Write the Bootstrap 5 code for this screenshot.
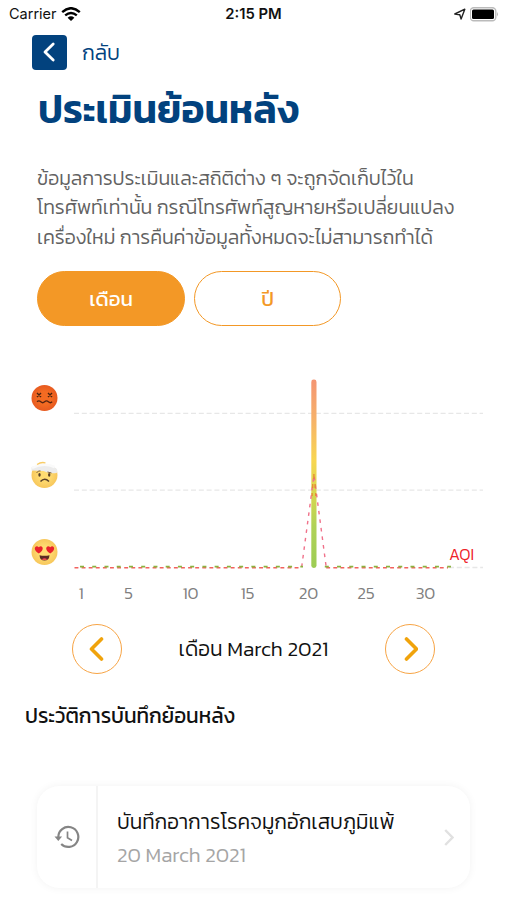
<!DOCTYPE html>
<html lang="th">
<head>
<meta charset="utf-8">
<meta name="viewport" content="width=device-width, initial-scale=1">
<title>ประเมินย้อนหลัง</title>
<link href="https://cdn.jsdelivr.net/npm/bootstrap@5.3.0/dist/css/bootstrap.min.css" rel="stylesheet">
<style>
:root{--navy:#02427e;--orange:#f39826}
body{font-family:Kanit,Prompt,"Noto Sans Thai","Noto Sans",sans-serif;font-weight:300;background:#fff;color:#111;overflow:hidden}
.screen{width:507px;height:900px;overflow:hidden}
.screen svg{display:block;flex:none}
.status{height:28px;padding:0 9px;font:14.5px/28px Inter,sans-serif}
.status>div{flex:1 1 0}
.clock{font-weight:600;font-size:14.8px}
.topbar{height:48px;padding:0 32px;gap:15px}
.back{width:35px;height:35px;border-radius:4px;background:var(--navy)}
.line{white-space:nowrap;display:block}
.back-label{font-size:21px;color:var(--navy);line-height:34px;padding-top:1px}
.title{font-size:39.2px;font-weight:600;line-height:66px;height:66px;color:var(--navy);padding-left:38px}
.intro{height:88px;margin:22px 0 19px 37px;font-size:19.55px;line-height:29.3px;color:#626262}
.pills{padding-left:37px;gap:9px}
.pill{width:148px;height:55px;border-radius:28px;border:1.5px solid var(--orange);font-size:20.5px;font-weight:400;color:var(--orange);padding:1px 0 0}
.pill:last-child{width:147px}
.pill.on,.pill.on:hover{background:var(--orange);color:#fff}
.chart{height:284px;margin-top:1px}
.chart text{font-family:Kanit,"Open Sans",sans-serif}
.month{height:50px;margin-top:13px;padding:0 72px}
.round{width:50px;height:50px;border:1.5px solid #f7a445}
.month-name{font-size:20.9px}
.history{height:40px;line-height:40px;margin:22px 0 0 25px;font-size:20.75px;font-weight:400}
.record{width:433px;height:102px;margin:50px 0 0 37px;border:0;border-radius:22px;box-shadow:0 0 9px rgba(0,0,0,.055)}
.record-icon{width:61px;border-right:2px solid #f4f4f4}
.record-body{padding:19px 0 0 19px}
.record-name{font-size:20.8px;line-height:34px}
.record-date{font-size:20.7px;line-height:32px;color:#a5a5a5}
</style>
<script src="https://cdn.jsdelivr.net/npm/bootstrap@5.3.0/dist/js/bootstrap.bundle.min.js"></script>
</head>
<body>
<main class="screen d-flex flex-column">
  <header class="status d-flex align-items-center">
    <div class="d-flex align-items-center gap-1"><span>Carrier</span>
      <svg width="20" height="15" viewBox="0 0 20 15" fill="none" stroke="#000" stroke-width="2.4"><path d="M1.2 5.1Q10-2.7 18.8 5.1M4.2 8.3Q10 3.5 15.8 8.3"/><path d="M6.6 10.7Q10 7.9 13.4 10.7L10 14Z" fill="#000" stroke="none"/></svg>
    </div>
    <span class="clock">2:15 PM</span>
    <div class="d-flex align-items-center justify-content-end gap-1">
      <svg width="13" height="13" viewBox="0 0 13 13" fill="none" stroke="#222" stroke-width="1.4" stroke-linejoin="round"><path d="M1.8 6 11.8 1.2 8.1 11 6.8 6.7Z"/></svg>
      <svg width="28" height="15" viewBox="0 0 28 15"><rect x=".3" y=".8" width="25.5" height="13" rx="3.5" fill="#fff" stroke="#bbb" stroke-width="1.4"/><rect x="2" y="2.6" width="22" height="9.5" rx="1.5"/><path d="M27 5v4.5Q29 7.3 27 5" fill="#bbb"/></svg>
    </div>
  </header>
  <nav class="topbar d-flex align-items-center">
    <a href="#" class="back d-flex align-items-center justify-content-center" aria-label="กลับ"><svg width="14" height="20" viewBox="0 0 14 20" fill="none" stroke="#fff" stroke-width="2.8" stroke-linecap="round" stroke-linejoin="round"><path d="M10.2 2 2 10l8.2 8"/></svg></a>
    <span class="back-label">กลับ</span>
  </nav>
  <h1 class="title mb-0"><span class="line">ประเมินย้อนหลัง</span></h1>
  <p class="intro"><span class="line">ข้อมูลการประเมินและสถิติต่าง ๆ จะถูกจัดเก็บไว้ใน</span><span class="line">โทรศัพท์เท่านั้น กรณีโทรศัพท์สูญหายหรือเปลี่ยนแปลง</span><span class="line">เครื่องใหม่ การคืนค่าข้อมูลทั้งหมดจะไม่สามารถทำได้</span></p>
  <div class="pills d-flex">
    <button class="pill on btn">เดือน</button>
    <button class="pill btn">ปี</button>
  </div>
  <svg class="chart" width="507" height="284" viewBox="0 327 507 284">
    <defs>
      <linearGradient id="bar" x1="0" y1="0" x2="0" y2="1"><stop offset="0" stop-color="#f49572"/><stop offset=".2" stop-color="#f6b06b"/><stop offset=".43" stop-color="#f8d651"/><stop offset=".6" stop-color="#d8d750"/><stop offset=".78" stop-color="#b0d257"/><stop offset="1" stop-color="#9ccc54"/></linearGradient>
      <radialGradient id="red"><stop offset=".5" stop-color="#f36b22"/><stop offset="1" stop-color="#e75a20"/></radialGradient>
      <radialGradient id="yellow"><stop offset=".4" stop-color="#ffdc72"/><stop offset="1" stop-color="#f7c75c"/></radialGradient>
    </defs>
    <g transform="translate(44.5 398)"><circle r="13" fill="url(#red)"/><path d="M-7.5-5l4 4m0-4-4 4M3.500-5l4 4m0-4-4 4" stroke="#48230f" stroke-width="1.4"/><path d="M-7.5 3.8q1.9-1.8 3.8 0t3.8 0 3.8 0 3.8 0" fill="none" stroke="#572410" stroke-width="1.3"/></g>
    <g transform="translate(44.5 475)"><circle r="13" fill="url(#yellow)"/><path d="M-14-14H14V-6Q2-10-14-5Z" fill="#fff"/><path d="M-13-8Q2-14 12.5-6 13.5-3 12-2 5-1-1-4L-13-4.5Z" fill="#ececec"/><path d="M-12.5-7Q-1-13 10-8" stroke="#fafafa" stroke-width="2.5" fill="none"/><path d="M-7.5-10.5Q-3-13.5 1-12" stroke="#f8cc67" stroke-width="1.3" fill="none"/><path d="M-8-2q2-3 4-2M3-3l4 1" stroke="#81613b" fill="none"/><ellipse cx="-5" cy="-.2" rx="1.2" ry="1.9" fill="#594128"/><ellipse cx="4.7" cy="-.2" rx="1.2" ry="1.9" fill="#594128"/><path d="M-4 6.5Q0 2 4.5 6.5" fill="none" stroke="#594128" stroke-width="1.5"/></g>
    <g transform="translate(44.5 552)"><circle r="13" fill="url(#yellow)"/><path id="heart" d="M-5.7 1.5C-13-3-8.5-8-5.7-4.7-2.9-8 1.6-3-5.7 1.5Z" fill="#e9212b"/><use href="#heart" x="11.4"/><path d="M-5 3.2Q0 4.5 5 3.2 4.7 8.4 0 8.5-4.7 8.4-5 3.2Z" fill="#5c2b24"/><path d="M-2.8 7.2Q0 5.3 2.8 7.2 0 9-2.8 7.2Z" fill="#f34952"/></g>
    <path d="M74 413.4H483M74 490.2H483M449 567.5H483" stroke="#e7e7e7" stroke-width="1.3" stroke-dasharray="5 2.8"/>
    <rect x="311.3" y="379.5" width="5.2" height="188.5" rx="2.4" fill="url(#bar)"/>
    <path d="M74.5 567.7H301.7M326.2 567.7H448" fill="none" stroke="#f2625f" stroke-width="1.5" stroke-dasharray="3.9 3.2"/>
    <path d="M301.7 567 314 475 326.2 567" fill="none" stroke="#f0718a" stroke-width="1.4" stroke-dasharray="3.6 5"/>
    <path d="M313.9 474v5m-1.2 5v4m2.4-4v4m-3 5v3m3.6-3v3" stroke="#e58a32" stroke-width="1.3"/>
    <path d="M80 566.7H303M324.8 566.7H451" stroke="#8cb23f" stroke-width="1.8" stroke-dasharray="4 8.24"/>
    <text x="449" y="560" font-size="16.5" fill="#ee2228" textLength="25" lengthAdjust="spacingAndGlyphs">AQI</text>
    <g font-size="17" fill="#808080" text-anchor="middle"><text x="81" y="599">1</text><text x="128.5" y="599">5</text><text x="190.5" y="599">10</text><text x="247.5" y="599">15</text><text x="308.5" y="599">20</text><text x="366" y="599">25</text><text x="425.5" y="599">30</text></g>
  </svg>
  <section class="month d-flex align-items-center justify-content-between">
    <button class="round btn rounded-circle p-0 d-flex align-items-center justify-content-center" aria-label="ก่อนหน้า"><svg width="16" height="24" viewBox="0 0 16 24" fill="none" stroke="#f0a30c" stroke-width="3.6" stroke-linecap="round" stroke-linejoin="round"><path d="M12.5 2 2.5 12l10 10"/></svg></button>
    <span class="month-name line">เดือน March 2021</span>
    <button class="round btn rounded-circle p-0 d-flex align-items-center justify-content-center" aria-label="ถัดไป"><svg width="16" height="24" viewBox="0 0 16 24" fill="none" stroke="#f0a30c" stroke-width="3.6" stroke-linecap="round" stroke-linejoin="round"><path d="M4.500 2l10 10-10 10"/></svg></button>
  </section>
  <h2 class="history mb-0"><span class="line">ประวัติการบันทึกย้อนหลัง</span></h2>
  <article class="record card flex-row">
    <div class="record-icon d-flex align-items-center justify-content-center"><svg width="26" height="24" viewBox="0 0 26 24" fill="none" stroke="#858585" stroke-width="2.2"><path d="M4.3 12A10 10 0 1 1 7.2 19"/><path d="M.5 11.5h7.6L4.3 16Z" fill="#858585" stroke="none"/><path d="M13.5 6.5v6.3l4.5 2.7" stroke-width="1.7"/></svg></div>
    <div class="record-body flex-grow-1"><span class="record-name line">บันทึกอาการโรคจมูกอักเสบภูมิแพ้</span><span class="record-date line">20 March 2021</span></div>
    <div class="d-flex align-items-center pe-3"><svg width="10" height="17" viewBox="0 0 10 17" fill="none" stroke="#e1e1e1" stroke-width="2.4"><path d="M1.2 1 8.5 8.5 1.2 16"/></svg></div>
  </article>
</main>
</body>
</html>
